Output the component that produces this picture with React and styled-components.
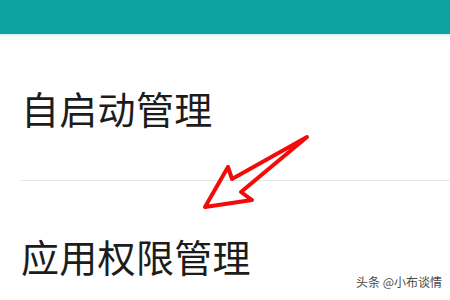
import React from 'react'
import styled, { createGlobalStyle } from 'styled-components'

const Global = createGlobalStyle`
  html, body {
    margin: 0;
    padding: 0;
    background: #ffffff;
  }
  body {
    font-family: "Noto Sans CJK SC", "Noto Sans", sans-serif;
  }
`

const Screen = styled.div`
  position: relative;
  width: 450px;
  height: 300px;
  overflow: hidden;
  background: #fff;
`

const TopBar = styled.div`
  height: 34px;
  background: #0ca3a0;
  box-shadow: 0 1px 3px rgba(12, 163, 160, 0.25);
`

const Item = styled.div`
  display: flex;
  align-items: center;
  height: ${p => p.h}px;
  padding-left: 21px;
  font-size: 38px;
  color: #1c1c1c;
  letter-spacing: 0.3px;
`

const Divider = styled.div`
  height: 1px;
  margin-left: 20px;
  background: #e6e6e6;
`

const ArrowMark = styled.svg`
  position: absolute;
  left: 0;
  top: 0;
  pointer-events: none;
`

const Watermark = styled.div`
  position: absolute;
  right: 8px;
  bottom: 10px;
  font-size: 12px;
  color: #4a4a4a;
  text-shadow: 0 0 2px #fff;
`

export default function App() {
  return (
    <Screen>
      <Global />
      <TopBar />
      <Item h={146}>自启动管理</Item>
      <Divider />
      <Item h={148}>应用权限管理</Item>
      <ArrowMark width="450" height="300" viewBox="0 0 450 300">
        <polygon
          points="307,137 232,179 228,167 205,207 252,200 241,192"
          fill="none"
          stroke="#f50a0a"
          strokeWidth="4"
          strokeLinejoin="round"
        />
      </ArrowMark>
      <Watermark>头条 @小布谈情</Watermark>
    </Screen>
  )
}
